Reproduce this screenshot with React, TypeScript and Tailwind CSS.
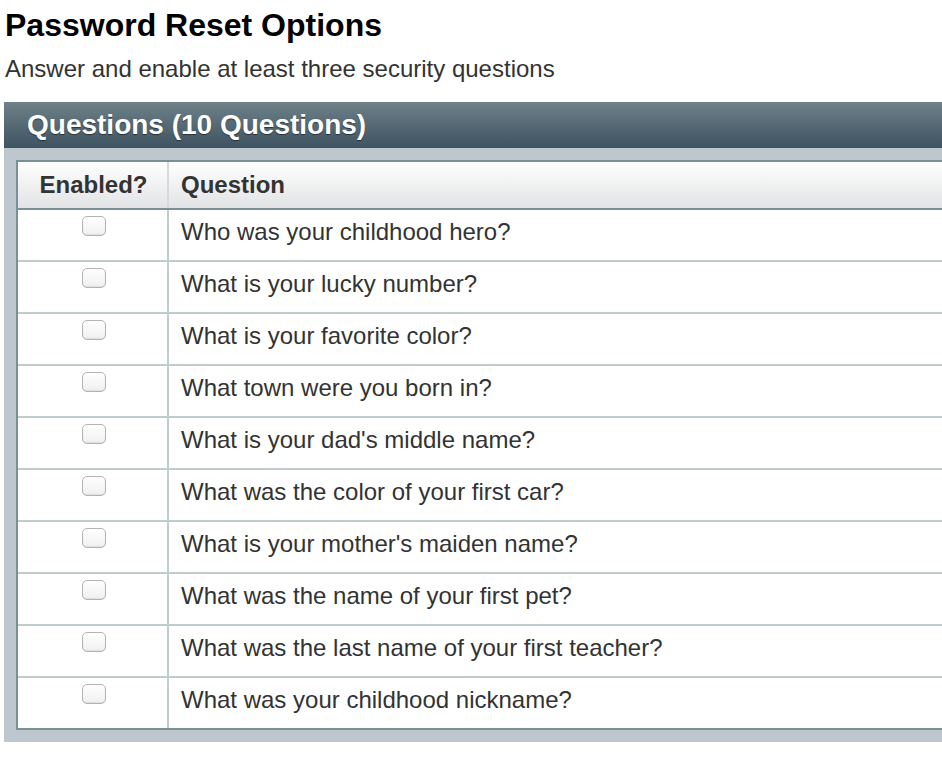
const questions = [
  'Who was your childhood hero?',
  'What is your lucky number?',
  'What is your favorite color?',
  'What town were you born in?',
  "What is your dad's middle name?",
  'What was the color of your first car?',
  "What is your mother's maiden name?",
  'What was the name of your first pet?',
  'What was the last name of your first teacher?',
  'What was your childhood nickname?',
];

const Checkbox = () => (
  <span className="block w-[24px] h-[20px] rounded-[5px] border border-[#b3b3b3] bg-gradient-to-b from-white to-[#f0f0f0] shadow-[inset_0_-1px_1px_rgba(0,0,0,0.08)]" />
);

export default function App() {
  return (
    <div className="w-[942px] h-[762px] overflow-hidden bg-white text-[#333] font-['Liberation_Sans',Arial,sans-serif]">
      <div className="pl-[5px] pt-[7px]">
        <h1 className="text-[32px] leading-[36px] font-bold text-black">Password Reset Options</h1>
        <p className="mt-[12px] text-[24px] leading-[28px] text-[#333]">Answer and enable at least three security questions</p>
      </div>

      <div className="ml-[4px] mt-[19px] w-[980px] bg-[#bec7cd] pb-[12px]">
        <div className="h-[46px] flex items-center pl-[23px] bg-gradient-to-b from-[#6f828a] to-[#3e5360]">
          <h2 className="text-[28px] leading-[32px] font-bold text-white [text-shadow:0_1px_1px_rgba(0,0,0,0.5)]">Questions (10 Questions)</h2>
        </div>

        <div className="ml-[12px] mt-[12px] border-t-2 border-l-2 border-b-2 border-[#7b9096] bg-white">
          <div className="flex h-[48px] border-b-2 border-[#7b9096] bg-gradient-to-b from-white to-[#e2e3e5] font-bold text-[24px] leading-[28px]">
            <div className="w-[151px] border-r-2 border-[#d6dadd] flex items-center justify-center pl-[2px]">Enabled?</div>
            <div className="flex-1 flex items-center pl-[12px]">Question</div>
          </div>
          {questions.map((q, i) => (
            <div
              key={q}
              className={`flex ${i < questions.length - 1 ? 'h-[52px] border-b-2 border-[#c0cbcd]' : 'h-[50px]'}`}
            >
              <div className="w-[151px] border-r-2 border-[#c0cbcd] flex justify-center pt-[6px] pl-[3px]">
                <Checkbox />
              </div>
              <div className="flex-1 pl-[12px] pt-[8px] text-[24px] leading-[28px]">{q}</div>
            </div>
          ))}
        </div>
      </div>
    </div>
  );
}
